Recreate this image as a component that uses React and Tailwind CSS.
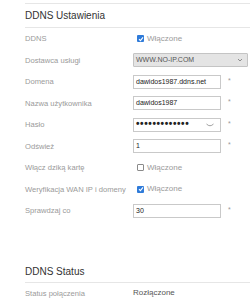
import React from 'react';

const Check = ({ on }) =>
  on ? (
    <span className="w-[7px] h-[7px] rounded-[1px] bg-[#2f7bd9] flex items-center justify-center">
      <svg width="6" height="6" viewBox="0 0 6 6">
        <path d="M1 3.2 L2.4 4.6 L5 1.4" fill="none" stroke="#fff" strokeWidth="1.1" />
      </svg>
    </span>
  ) : (
    <span className="w-[7px] h-[7px] rounded-[1px] border border-[#8a8a8a] bg-white" />
  );

const Row = ({ label, children }) => (
  <div className="h-[21.5px] flex items-center">
    <div className="w-[108px] shrink-0 text-[7.6px] text-[#9a9a9a] whitespace-nowrap">{label}</div>
    <div className="flex items-center">{children}</div>
  </div>
);

const Input = ({ value, children }) => (
  <div className="w-[88px] h-[14px] border border-[#c9c9c9] bg-white flex items-center px-[2px] text-[7px] text-[#222] justify-between">
    <span>{value}</span>
    {children}
  </div>
);

const Star = () => <span className="ml-[7px] text-[7px] text-[#999] leading-none -mt-[3px]">*</span>;

const Toggle = ({ on }) => (
  <div className="flex items-center ml-[4px] gap-[3px] text-[8px] text-[#9a9a9a]">
    <Check on={on} />
    <span>Włączone</span>
  </div>
);

export default function App() {
  return (
    <div className="w-[250px] h-[301px] overflow-hidden bg-white pl-[25px] pt-[3px] font-['Liberation_Sans',Arial,sans-serif]">
      <div className="border-t border-[#e6e6e6]">
        <h2 className="h-[24px] flex items-center text-[10px] text-[#333] border-b border-[#e6e6e6]">DDNS Ustawienia</h2>
        <Row label="DDNS"><Toggle on /></Row>
        <Row label="Dostawca usługi">
          <div className="w-[115px] h-[14px] border border-[#c4c4c4] bg-[#e4e4e4] rounded-[1px] flex items-center justify-between px-[2px] text-[7px] text-[#555]">
            <span>WWW.NO-IP.COM</span>
            <svg width="6" height="4" viewBox="0 0 6 4" className="mr-[2px]">
              <path d="M1 1 L3 3 L5 1" fill="none" stroke="#777" strokeWidth="0.8" />
            </svg>
          </div>
        </Row>
        <Row label="Domena"><Input value="dawidos1987.ddns.net" /><Star /></Row>
        <Row label="Nazwa użytkownika"><Input value="dawidos1987" /><Star /></Row>
        <Row label="Hasło">
          <Input value={<span className="tracking-[0.6px] text-[10px] font-bold leading-none">•••••••••••••</span>}>
            <svg width="8" height="4" viewBox="0 0 8 4" className="mr-[4px]">
              <path d="M0.5 1 Q4 4.5 7.5 1" fill="none" stroke="#888" strokeWidth="0.8" />
            </svg>
          </Input>
          <Star />
        </Row>
        <Row label="Odśwież"><Input value="1" /><Star /></Row>
        <Row label="Włącz dziką kartę"><Toggle /></Row>
        <Row label="Weryfikacja WAN IP i domeny"><Toggle on /></Row>
        <Row label="Sprawdzaj co"><Input value="30" /><Star /></Row>

        <h2 className="mt-[40px] h-[21px] flex items-center text-[10px] text-[#333] border-b border-[#e6e6e6]">DDNS Status</h2>
        <div className="h-[21.5px] flex items-center">
          <div className="w-[108px] text-[7.6px] text-[#9a9a9a]">Status połączenia</div>
          <div className="text-[8px] text-[#555]">Rozłączone</div>
        </div>
      </div>
    </div>
  );
}
